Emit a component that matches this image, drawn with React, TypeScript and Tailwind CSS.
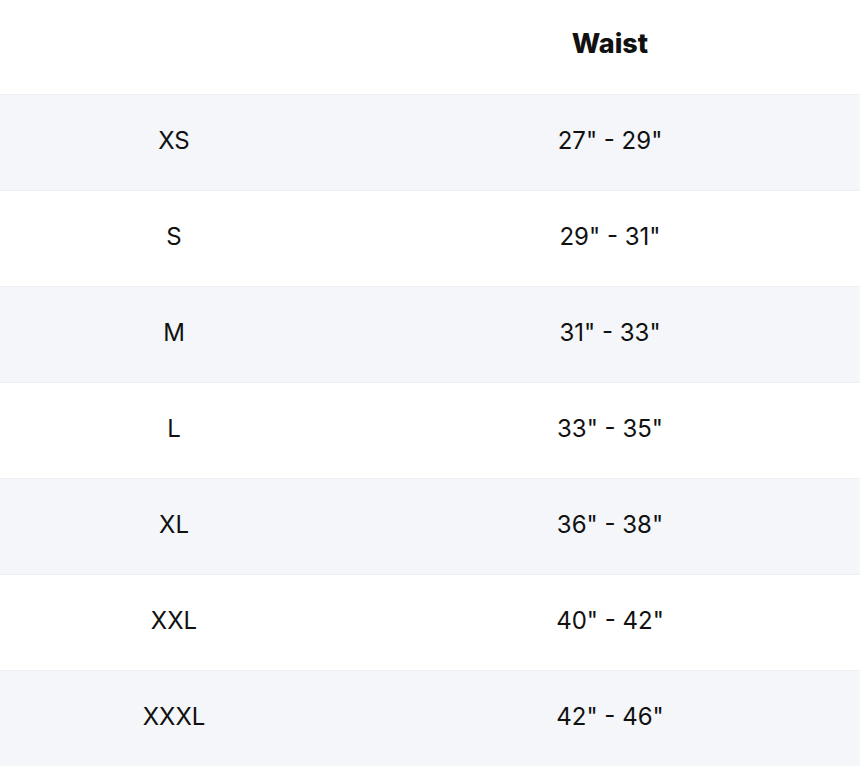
const rows: [string, string][] = [
  ["XS", '27" - 29"'],
  ["S", '29" - 31"'],
  ["M", '31" - 33"'],
  ["L", '33" - 35"'],
  ["XL", '36" - 38"'],
  ["XXL", '40" - 42"'],
  ["XXXL", '42" - 46"'],
];

export default function App() {
  return (
    <div className="min-h-screen bg-white font-['Inter',sans-serif] text-[#111]">
      <div className="w-[860px]">
        <div className="grid h-[94px] grid-cols-[348px_512px] items-center pb-[6px]">
          <div />
          <div className="pl-[12px] text-center text-[27px] font-extrabold">Waist</div>
        </div>
        {rows.map(([size, waist], i) => (
          <div
            key={size}
            className={`grid h-[96px] grid-cols-[348px_512px] items-center border-t border-[#eef0f3] pb-[3px] text-[24px] ${
              i % 2 === 0 ? "bg-[#f4f6f9]" : "bg-white"
            }`}
          >
            <div className="text-center">{size}</div>
            <div className="pl-[12px] text-center">{waist}</div>
          </div>
        ))}
      </div>
    </div>
  );
}
